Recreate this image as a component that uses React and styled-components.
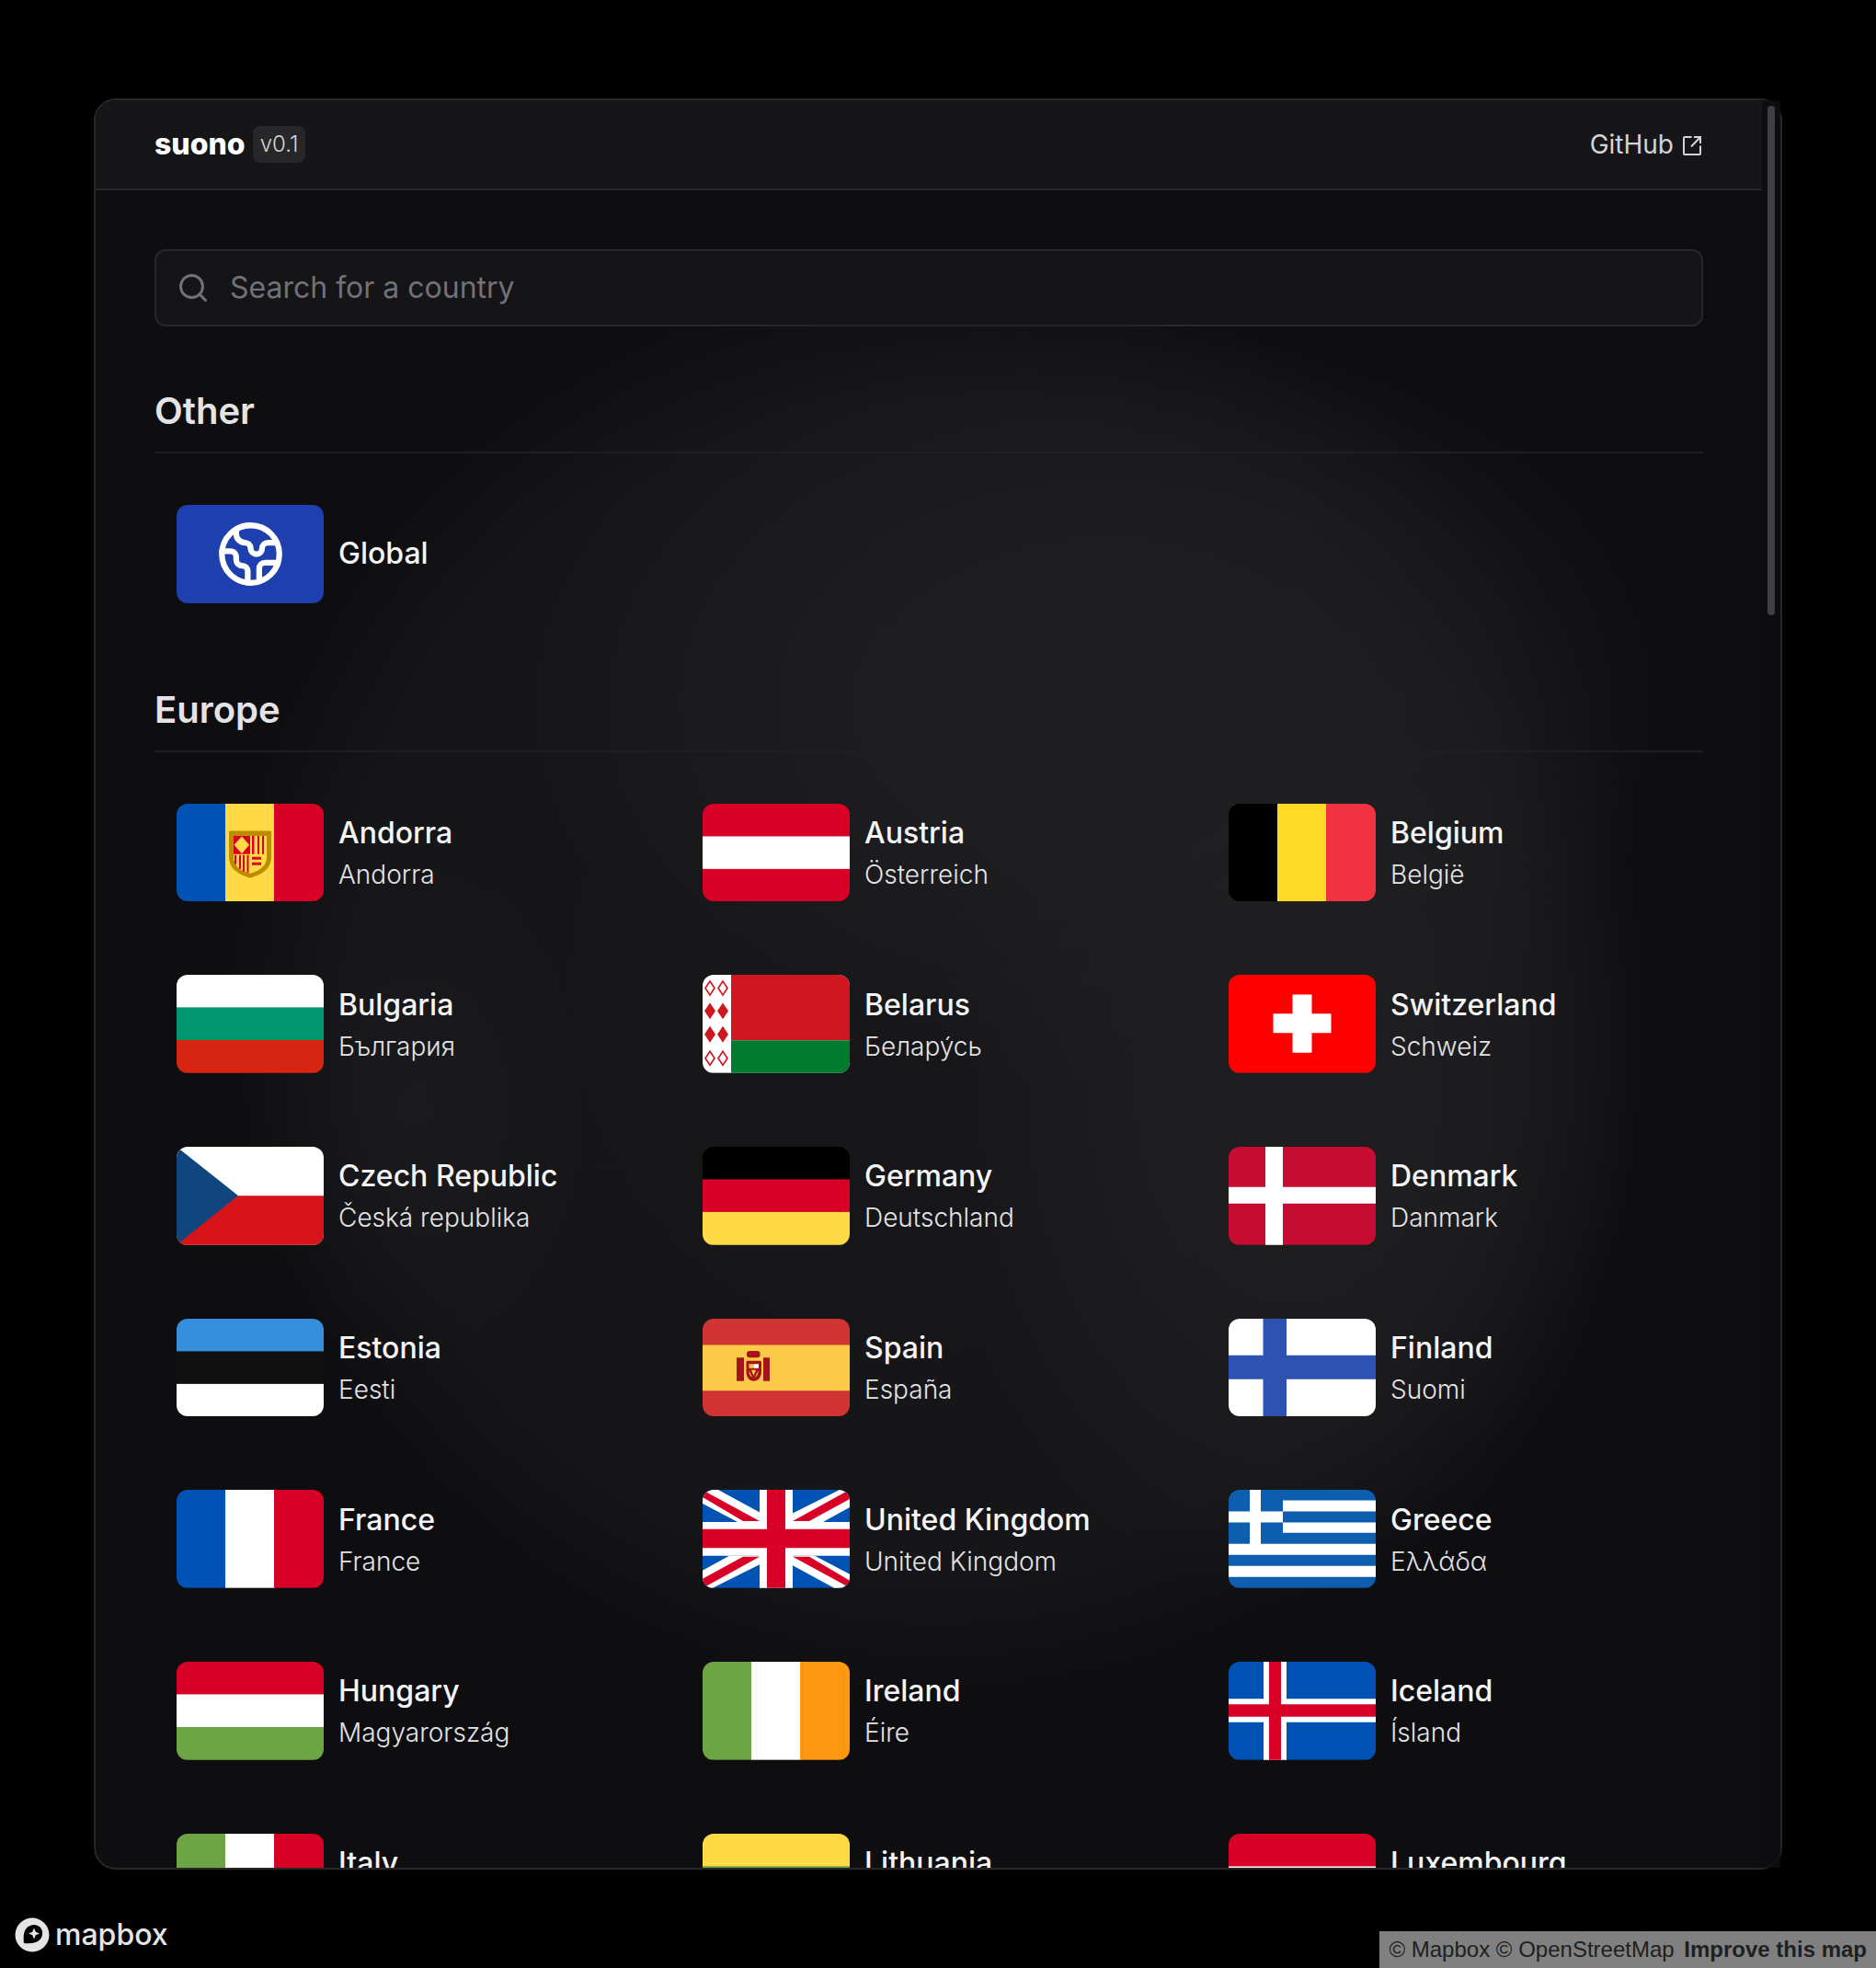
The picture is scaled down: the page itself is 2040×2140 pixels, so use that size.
import React, { useState } from "react";
import styled, { createGlobalStyle } from "styled-components";
import { Search, Earth } from "lucide-react";

const Global = createGlobalStyle`
  * { box-sizing: border-box; }
  body {
    margin: 0;
    background: #000;
    color: #f4f4f5;
    font-family: Inter, "Noto Sans", "Liberation Sans", sans-serif;
  }
`;

const Page = styled.div`
  height: 100vh;
  position: relative;
  display: grid;
  place-items: center;
  overflow: hidden;
`;

const Panel = styled.main`
  position: relative;
  width: 90%;
  height: 90%;
  border: 2px solid #27272a;
  border-radius: 24px;
  background-color: #0e0e10;
  background-image:
    radial-gradient(ellipse 34% 22% at 60% 34%, rgba(32, 32, 34, 0.8) 0%, rgba(32, 32, 34, 0.75) 40%, rgba(32, 32, 34, 0.35) 75%, transparent 100%),
    radial-gradient(ellipse 21% 29% at 71% 56%, rgba(32, 32, 34, 0.8) 0%, rgba(32, 32, 34, 0.75) 40%, rgba(32, 32, 34, 0.35) 75%, transparent 100%),
    radial-gradient(ellipse 10% 14% at 19% 57%, rgba(32, 32, 34, 0.4) 0%, transparent 100%),
    radial-gradient(ellipse 43% 41% at 50% 50%, rgba(23, 23, 25, 0.95) 0%, rgba(23, 23, 25, 0.9) 80%, rgba(23, 23, 25, 0.45) 90%, transparent 100%);
`;

const ScrollArea = styled.div`
  height: 100%;
  overflow-y: auto;
  scrollbar-width: none;
  border-radius: 22px;
  padding-right: 20px;
`;

const Track = styled.div`
  position: absolute;
  top: 0;
  right: 0;
  width: 20px;
  height: 100%;
  padding: 6px;
  background: rgba(14, 14, 16, 0.8);
`;

const Thumb = styled.div`
  width: 8px;
  height: 29%;
  border-radius: 4px;
  background: #3f3f46;
`;

const Header = styled.header`
  display: flex;
  align-items: center;
  justify-content: space-between;
  height: 98px;
  padding: 0 64px;
  border-bottom: 2px solid #27272a;
  background: #161618;
`;

const Brand = styled.div`
  display: flex;
  align-items: center;
  gap: 8px;
`;

const BrandName = styled.h1`
  margin: 0;
  font-size: 32px;
  line-height: 40px;
  font-weight: 800;
  color: #fff;
`;

const Version = styled.span`
  padding: 0 8px;
  border-radius: 8px;
  background: #272729;
  color: #d4d4d8;
  font-size: 24px;
  line-height: 40px;
  font-weight: 300;
`;

const HeaderLink = styled.a`
  display: flex;
  align-items: center;
  gap: 8px;
  color: #d4d4d8;
  font-size: 28px;
  line-height: 40px;
  text-decoration: none;
`;

const Content = styled.div`
  display: flex;
  flex-direction: column;
  gap: 64px;
  padding: 64px;
`;

const SearchBox = styled.label`
  display: flex;
  align-items: center;
  gap: 22px;
  height: 84px;
  padding: 0 22px;
  border: 2px solid #27272a;
  border-radius: 12px;
  background: #151517;
  color: #71717a;
`;

const SearchInput = styled.input`
  flex: 1;
  min-width: 0;
  padding: 0;
  border: 0;
  outline: 0;
  background: transparent;
  color: #f4f4f5;
  font: inherit;
  font-size: 32px;
  line-height: 48px;
  &::placeholder { color: #71717a; opacity: 1; }
`;

const Section = styled.section`
  display: flex;
  flex-direction: column;
  gap: 32px;
`;

const SectionTitle = styled.h2`
  margin: 0;
  padding-bottom: 16px;
  border-bottom: 2px solid #1f1f21;
  color: #e4e4e7;
  font-size: 40px;
  line-height: 56px;
  font-weight: 600;
`;

const CountryGrid = styled.div`
  display: grid;
  grid-template-columns: repeat(3, minmax(0, 1fr));
  column-gap: 32px;
  row-gap: 32px;
`;

const CountryCard = styled.button`
  display: flex;
  align-items: center;
  gap: 16px;
  padding: 24px;
  border: 0;
  background: transparent;
  color: inherit;
  font: inherit;
  text-align: left;
  cursor: pointer;
`;

const FlagFrame = styled.span`
  display: flex;
  align-items: center;
  justify-content: center;
  flex: none;
  width: 160px;
  aspect-ratio: 3 / 2;
  border-radius: 12px;
  overflow: hidden;
  background: ${(p) => p.$fill || "transparent"};
  color: #fff;
`;

const FlagSvg = styled.svg`
  display: block;
  width: 100%;
  height: 100%;
`;

const Names = styled.span`
  display: flex;
  flex-direction: column;
  min-width: 0;
`;

const Name = styled.span`
  color: #f4f4f5;
  font-size: 32px;
  line-height: 48px;
  font-weight: 500;
  white-space: nowrap;
`;

const LocalName = styled.span`
  color: #e4e4e7;
  font-size: 28px;
  line-height: 42px;
  font-weight: 300;
  white-space: nowrap;
`;

const MapLogo = styled.a`
  position: absolute;
  left: 16px;
  bottom: 12px;
  display: flex;
  align-items: center;
  gap: 6px;
  color: #e5e5e5;
  font-size: 32px;
  line-height: 48px;
  font-weight: 500;
  text-decoration: none;
`;

const Attribution = styled.footer`
  position: absolute;
  right: 0;
  bottom: 0;
  padding: 0 10px;
  background: #808080;
  font-family: "Liberation Sans", Arial, sans-serif;
  font-size: 24px;
  line-height: 40px;
`;

const AttributionLink = styled.a`
  color: #202020;
  text-decoration: none;
  font-weight: ${(p) => (p.$strong ? 700 : 400)};
  margin-left: ${(p) => (p.$strong ? "4px" : 0)};
`;

const Columns = ({ colors }) =>
  colors.map((c, i) => <rect key={i} x={i * 53} y="0" width="54" height="107" fill={c} />);

const Bands = ({ colors }) =>
  colors.map((c, i) => <rect key={i} x="0" y={(i * 320) / 9} width="160" height="36" fill={c} />);

const diamond = (cx, cy) => `M${cx} ${cy - 9}L${cx + 6} ${cy}L${cx} ${cy + 9}L${cx - 6} ${cy}Z`;
const diamondHole = (cx, cy) => `M${cx} ${cy - 6}L${cx + 4} ${cy}L${cx} ${cy + 6}L${cx - 4} ${cy}Z`;

const flags = {
  ad: (
    <>
      <Columns colors={["#0052b4", "#ffda44", "#d80027"]} />
      <path d="M57 29.500H103V58C103 71 93 77 80 81C67 77 57 71 57 58Z" fill="#bc8b00" />
      <path d="M62 35H98V58C98 68 91 73 80 76C69 73 62 68 62 58Z" fill="#ffda44" />
      <path d="M62 35H80V55H62ZM82 35H84.500V55H82ZM88 35H90V55H88ZM93 35H95V55H93ZM82 58H92V61H82ZM82 64H92V67H82ZM63 56H65V66H63ZM68 56H70V71H68ZM72 56H74V74H72ZM76.500 56H78.500V75H76.500Z" fill="#d80027" />
      <path d="M71 35.500L79 45L71 54.500L62.500 45Z" fill="#ffda44" />
    </>
  ),
  at: <Bands colors={["#d80027", "#fff", "#d80027"]} />,
  be: <Columns colors={["#000", "#fdda25", "#ef3340"]} />,
  bg: <Bands colors={["#fff", "#00966e", "#d62612"]} />,
  by: (
    <>
      <rect width="160" height="107" fill="#fff" />
      <path d="M31 0H160V71.500H31Z" fill="#ce1720" />
      <path d="M31 71.500H160V107H31Z" fill="#007c30" />
      <path
        d={[14.5, 39.5, 65, 91].map((y) => diamond(8, y) + diamond(22, y)).join("")}
        fill="#ce1720"
      />
      <path d={[14.5, 91].map((y) => diamondHole(8, y) + diamondHole(22, y)).join("")} fill="#fff" />
    </>
  ),
  ch: (
    <>
      <rect width="160" height="107" fill="#f00" />
      <path d="M69.500 21.500H90.500V42.500H111.500V63.500H90.500V85H69.500V63.500H48.500V42.500H69.500Z" fill="#fff" />
    </>
  ),
  cz: (
    <>
      <rect width="160" height="107" fill="#fff" />
      <path d="M0 53.300H160V107H0Z" fill="#d7141a" />
      <path d="M0 0L67 53.300L0 107Z" fill="#11457e" />
    </>
  ),
  de: <Bands colors={["#000", "#d80027", "#ffda44"]} />,
  dk: (
    <>
      <rect width="160" height="107" fill="#c60c30" />
      <path d="M40 0H59V44H160V62H59V107H40V62H0V44H40Z" fill="#fff" />
    </>
  ),
  ee: <Bands colors={["#368fdc", "#111", "#fff"]} />,
  es: (
    <>
      <rect width="160" height="107" fill="#d03433" />
      <path d="M0 28.500H160V78.500H0Z" fill="#fbca46" />
      <g fill="#a41517">
        <path d="M37 42.500H45V68H37ZM66 42.500H73V68H66Z" />
        <path d="M51 35H59.500Q62.500 35 62.500 38V40Q62.500 42.500 59.500 42.500H51Q48 42.500 48 40V38Q48 35 51 35Z" />
        <path d="M49 46H62Q64.500 46 64 49V58C64 64 60 68 55.500 68C51 68 47.500 64 47.500 58V49Q47 46 49 46Z" />
      </g>
      <path d="M50.500 49.500H55.500V54H50.500Z" fill="#fbca46" />
      <path d="M55.500 49.500H61V54H55.500Z" fill="#fff" />
      <path d="M50.500 56.500L54 64Q50.500 62 50.500 56.500ZM60.500 56.500L57 64Q60.500 62 60.500 56.500ZM53 56H58L55.500 62Z" fill="#fbca46" />
    </>
  ),
  fi: (
    <>
      <rect width="160" height="107" fill="#fff" />
      <path d="M37.500 0H63V40H160V66H63V107H37.500V66H0V40H37.500Z" fill="#2e52b2" />
    </>
  ),
  fr: <Columns colors={["#0052b4", "#fff", "#d80027"]} />,
  gb: (
    <>
      <rect width="160" height="107" fill="#0052b4" />
      <path d="M0 0H17L63 25V35H38L0 15ZM160 0H149L97 26V35H131L160 19ZM160 107H143L97 82V72H122L160 92ZM0 107H11L63 81V72H29L0 88Z" fill="#fff" />
      <path d="M0 0L5 3L62 34H44L0 8ZM160 0L156 2L98 34H116L160 10ZM160 107L155 104L98 73H116L160 99ZM0 107L4 105L62 73H44L0 97Z" fill="#d80027" />
      <path d="M62 0H98V35H160V72H98V107H62V72H0V35H62Z" fill="#fff" />
      <path d="M70 0H90V43H160V63.500H90V107H70V63.500H0V43H70Z" fill="#d80027" />
    </>
  ),
  gr: (
    <>
      <rect width="160" height="107" fill="#0d5eaf" />
      <path d="M59 11.500H160V23.500H59ZM59 35.500H160V47H59ZM0 59H160V71H0ZM0 83H160V95H0ZM23 0H35V59H23ZM0 23.500H59V35.500H0Z" fill="#fff" />
    </>
  ),
  hu: <Bands colors={["#d80027", "#fff", "#6da544"]} />,
  ie: <Columns colors={["#6da544", "#fff", "#ff9811"]} />,
  is: (
    <>
      <rect width="160" height="107" fill="#0052b4" />
      <path d="M38 0H63V40.500H160V66H63V107H38V66H0V40.500H38Z" fill="#fff" />
      <path d="M44 0H57V46.500H160V60H57V107H44V60H0V46.500H44Z" fill="#d80027" />
    </>
  ),
  it: <Columns colors={["#6da544", "#fff", "#d80027"]} />,
  lt: <Bands colors={["#ffda44", "#6da544", "#d80027"]} />,
  lu: <Bands colors={["#d80027", "#fff", "#338af3"]} />,
};

const europe = [
  ["ad", "Andorra", "Andorra"],
  ["at", "Austria", "Österreich"],
  ["be", "Belgium", "België"],
  ["bg", "Bulgaria", "България"],
  ["by", "Belarus", "Белару́сь"],
  ["ch", "Switzerland", "Schweiz"],
  ["cz", "Czech Republic", "Česká republika"],
  ["de", "Germany", "Deutschland"],
  ["dk", "Denmark", "Danmark"],
  ["ee", "Estonia", "Eesti"],
  ["es", "Spain", "España"],
  ["fi", "Finland", "Suomi"],
  ["fr", "France", "France"],
  ["gb", "United Kingdom", "United Kingdom"],
  ["gr", "Greece", "Ελλάδα"],
  ["hu", "Hungary", "Magyarország"],
  ["ie", "Ireland", "Éire"],
  ["is", "Iceland", "Ísland"],
  ["it", "Italy", "Italia"],
  ["lt", "Lithuania", "Lietuva"],
  ["lu", "Luxembourg", "Lëtzebuerg"],
];

const ExternalIcon = () => (
  <svg width="24" height="24" viewBox="0 0 24 24" fill="none" stroke="currentColor" strokeWidth="2" aria-hidden="true">
    <path d="M11.500 4H4Q3 4 3 5V22Q3 23 4 23H20Q21 23 21 22V13.500" />
    <path d="M14 4H21V11M21 4L11 14.500" />
  </svg>
);

const MapMark = () => (
  <svg width="38" height="38" viewBox="0 0 38 38" aria-hidden="true">
    <circle cx="19" cy="19" r="18.500" fill="#e5e5e5" />
    <path d="M10 28C9 20 10 14 14 10.500C18 7 24 7 27.500 10.500C31 14 31 20 27.500 24C24 28 17 29 10 28Z" fill="#000" />
    <path d="M21 11.500L22.800 15.700L27 17.500L22.800 19.300L21 23.500L19.200 19.300L15 17.500L19.200 15.700Z" fill="#e5e5e5" />
  </svg>
);

export default function App() {
  const [query, setQuery] = useState("");
  const q = query.trim().toLowerCase();
  const shown = europe.filter(([, name, local]) => (name + " " + local).toLowerCase().includes(q));

  return (
    <>
      <Global />
      <Page>
        <Panel>
          <ScrollArea>
            <Header>
              <Brand>
                <BrandName>suono</BrandName>
                <Version>v0.1</Version>
              </Brand>
              <HeaderLink href="#github">
                GitHub
                <ExternalIcon />
              </HeaderLink>
            </Header>
            <Content>
              <SearchBox>
                <Search size={36} aria-hidden="true" />
                <SearchInput
                  type="text"
                  aria-label="Search for a country"
                  placeholder="Search for a country"
                  value={query}
                  onChange={(e) => setQuery(e.target.value)}
                />
              </SearchBox>
              <Section>
                <SectionTitle>Other</SectionTitle>
                <CountryGrid>
                  <CountryCard type="button">
                    <FlagFrame $fill="#1e40af">
                      <Earth size={75} aria-hidden="true" />
                    </FlagFrame>
                    <Names>
                      <Name>Global</Name>
                    </Names>
                  </CountryCard>
                </CountryGrid>
              </Section>
              <Section>
                <SectionTitle>Europe</SectionTitle>
                <CountryGrid>
                  {shown.map(([code, name, local]) => (
                    <CountryCard type="button" key={code}>
                      <FlagFrame>
                        <FlagSvg viewBox="0 0 160 107" preserveAspectRatio="none" aria-hidden="true">
                          {flags[code]}
                        </FlagSvg>
                      </FlagFrame>
                      <Names>
                        <Name>{name}</Name>
                        <LocalName>{local}</LocalName>
                      </Names>
                    </CountryCard>
                  ))}
                </CountryGrid>
              </Section>
            </Content>
          </ScrollArea>
          <Track>
            <Thumb />
          </Track>
        </Panel>
        <MapLogo href="#mapbox">
          <MapMark />
          mapbox
        </MapLogo>
        <Attribution>
          <AttributionLink href="#about">© Mapbox</AttributionLink>{" "}
          <AttributionLink href="#osm">© OpenStreetMap</AttributionLink>{" "}
          <AttributionLink href="#improve" $strong>
            Improve this map
          </AttributionLink>
        </Attribution>
      </Page>
    </>
  );
}
